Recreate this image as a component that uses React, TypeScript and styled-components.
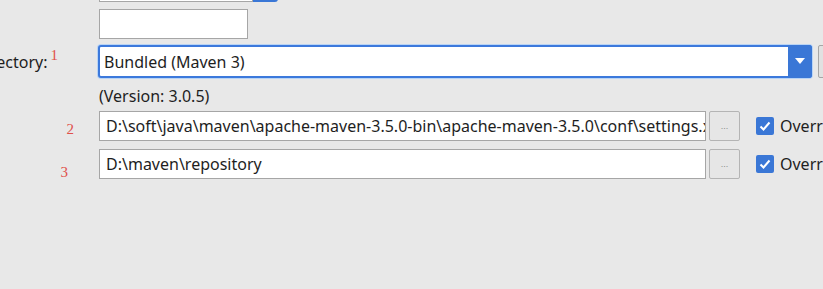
import * as React from "react";
import styled, { createGlobalStyle } from "styled-components";

const GlobalStyle = createGlobalStyle`
  html, body {
    margin: 0;
    padding: 0;
    background: #e8e8e8;
  }
  body {
    font-family: "Noto Sans", "Open Sans", sans-serif;
    color: #1e1e1e;
  }
`;

const Page = styled.div`
  width: 823px;
  height: 289px;
  overflow: hidden;
  background: #e8e8e8;
`;

// the form starts above the visible area, only the tail of the top row shows
const Form = styled.div`
  margin-top: -28px;
  display: flex;
  flex-direction: column;
  width: 1100px;
`;

const Row = styled.div<{ $gap: number }>`
  display: flex;
  align-items: center;
  margin-bottom: ${p => p.$gap}px;
`;

const Label = styled.div<{ $pad: number; $drop?: number }>`
  width: ${p => 99 - p.$pad}px;
  padding-right: ${p => p.$pad}px;
  flex: none;
  display: flex;
  justify-content: flex-end;
  align-items: center;
  white-space: nowrap;
  font-size: 16px;
  position: relative;
  top: ${p => p.$drop || 0}px;
`;

const Mark = styled.span<{ $sup?: boolean }>`
  color: #e0504a;
  font-family: "Liberation Serif", serif;
  font-size: 15px;
  margin-left: 3px;
  position: relative;
  top: ${p => (p.$sup ? -6 : 0)}px;
`;

const TextBox = styled.div<{ $w: number }>`
  box-sizing: border-box;
  width: ${p => p.$w}px;
  height: 30px;
  background: #fff;
  border: 1px solid #a6a6a6;
  padding: 0 6px;
  display: flex;
  align-items: center;
  font-size: 16px;
  white-space: nowrap;
  overflow: hidden;
`;

const TopButton = styled.div`
  width: 25px;
  height: 30px;
  box-sizing: border-box;
  background: #3a77d6;
  border-radius: 0 0 3px 0;
`;

const Combo = styled.div`
  box-sizing: border-box;
  width: 714px;
  height: 33px;
  margin-left: -1px;
  display: flex;
  border: 2px solid #3c79dc;
  border-radius: 3px;
  box-shadow: 0 0 0 1px #b9d4f5;
  background: #fff;
`;

const ComboText = styled.div`
  flex: 1;
  display: flex;
  align-items: center;
  padding-left: 4px;
  font-size: 16px;
`;

const ComboArrow = styled.div`
  width: 24px;
  background: #3a77d6;
  display: flex;
  align-items: center;
  justify-content: center;
  margin: -2px -2px -2px 0;
  border-radius: 0 3px 3px 0;
`;

const SideBox = styled.div`
  margin-left: 6px;
  box-sizing: border-box;
  width: 40px;
  height: 33px;
  border: 1px solid #a6a6a6;
  background: #e1e1e1;
  border-radius: 2px;
`;

const Version = styled.div`
  padding-left: 99px;
  font-size: 16px;
  height: 20px;
  line-height: 18px;
  margin-bottom: 4px;
`;

const Browse = styled.div`
  box-sizing: border-box;
  margin-left: 3px;
  width: 31px;
  height: 30px;
  border: 1px solid #b4b4b4;
  border-radius: 2px;
  background: #e6e6e6;
  color: #8c8c8c;
  font-family: "Liberation Sans", sans-serif;
  font-size: 9px;
  display: flex;
  align-items: center;
  justify-content: center;
`;

const Check = styled.div`
  margin-left: 16px;
  width: 18px;
  height: 18px;
  border-radius: 2px;
  background: #3a77d6;
  display: flex;
  align-items: center;
  justify-content: center;
  flex: none;
`;

const CheckLabel = styled.span`
  margin-left: 6px;
  font-size: 16px;
  white-space: nowrap;
`;

const Tick = () => (
  <svg width="14" height="14" viewBox="0 0 14 14">
    <path d="M2.5 7.5 L5.5 10.5 L11.5 3.5" fill="none" stroke="#fff" strokeWidth="2" />
  </svg>
);

const Arrow = () => (
  <svg width="10" height="7" viewBox="0 0 10 7">
    <path d="M0 0 H10 L5 6 Z" fill="#fff" />
  </svg>
);

export default function App() {
  return (
    <Page>
      <GlobalStyle />
      <Form>
        <Row $gap={7}>
          <Label $pad={0} />
          <TextBox $w={154} />
          <TopButton />
        </Row>
        <Row $gap={6}>
          <Label $pad={0} />
          <TextBox $w={149} />
        </Row>
        <Row $gap={9}>
          <Label $pad={41}>
            Maven home directory:<Mark $sup>1</Mark>
          </Label>
          <Combo>
            <ComboText>Bundled (Maven 3)</ComboText>
            <ComboArrow>
              <Arrow />
            </ComboArrow>
          </Combo>
          <SideBox />
        </Row>
        <Version>(Version: 3.0.5)</Version>
        <Row $gap={8}>
          <Label $pad={25} $drop={3}>
            <Mark>2</Mark>
          </Label>
          <TextBox $w={607}>
            D:\soft\java\maven\apache-maven-3.5.0-bin\apache-maven-3.5.0\conf\settings.xml
          </TextBox>
          <Browse>...</Browse>
          <Check>
            <Tick />
          </Check>
          <CheckLabel>Override</CheckLabel>
        </Row>
        <Row $gap={0}>
          <Label $pad={31} $drop={8}>
            <Mark>3</Mark>
          </Label>
          <TextBox $w={607}>D:\maven\repository</TextBox>
          <Browse>...</Browse>
          <Check>
            <Tick />
          </Check>
          <CheckLabel>Override</CheckLabel>
        </Row>
      </Form>
    </Page>
  );
}
